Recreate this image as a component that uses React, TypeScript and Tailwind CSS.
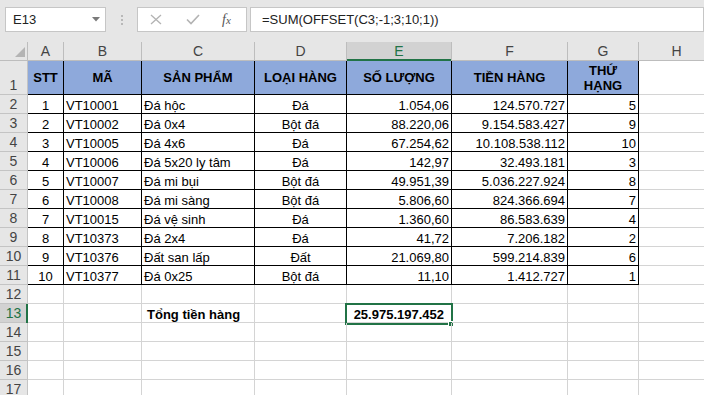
import React from "react";

const COLW = [
  "w-[36px]",
  "w-[78px]",
  "w-[113px]",
  "w-[92px]",
  "w-[105px]",
  "w-[116px]",
  "w-[71px]",
  "w-[76px]",
];
const LETTERS = ["A", "B", "C", "D", "E", "F", "G", "H"];

const DATA: string[][] = [
  ["1", "VT10001", "Đá hộc", "Đá", "1.054,06", "124.570.727", "5"],
  ["2", "VT10002", "Đá 0x4", "Bột đá", "88.220,06", "9.154.583.427", "9"],
  ["3", "VT10005", "Đá 4x6", "Đá", "67.254,62", "10.108.538.112", "10"],
  ["4", "VT10006", "Đá 5x20 ly tâm", "Đá", "142,97", "32.493.181", "3"],
  ["5", "VT10007", "Đá mi bụi", "Bột đá", "49.951,39", "5.036.227.924", "8"],
  ["6", "VT10008", "Đá mi sàng", "Bột đá", "5.806,60", "824.366.694", "7"],
  ["7", "VT10015", "Đá vệ sinh", "Đá", "1.360,60", "86.583.639", "4"],
  ["8", "VT10373", "Đá 2x4", "Đá", "41,72", "7.206.182", "2"],
  ["9", "VT10376", "Đất san lấp", "Đất", "21.069,80", "599.214.839", "6"],
  ["10", "VT10377", "Đá 0x25", "Bột đá", "11,10", "1.412.727", "1"],
];

const ALIGN = [
  "justify-center",
  "justify-start pl-[2px]",
  "justify-start pl-[2px]",
  "justify-center",
  "justify-end pr-[2px]",
  "justify-end pr-[2px]",
  "justify-end pr-[2px]",
];

const HEADERS = ["STT", "MÃ", "SẢN PHẨM", "LOẠI HÀNG", "SỐ LƯỢNG", "TIỀN HÀNG", "THỨ HẠNG"];

function RowHeader({ n, tall, active }: { n: number; tall?: boolean; active?: boolean }) {
  return (
    <div
      className={
        "relative w-[28px] shrink-0 flex items-end justify-center border-r border-b border-[#c4c4c4] text-[14px] leading-[15px] " +
        (active ? "bg-[#d2d2d2] text-[#217346]" : "bg-[#e6e6e6] text-[#444]") +
        (tall ? " h-[34px]" : " h-[19px]")
      }
    >
      <span className="pb-[1px]">{n}</span>
      {active && <div className="absolute right-[-1px] top-0 w-[2px] h-[19px] bg-[#217346]" />}
    </div>
  );
}

export default function App() {
  return (
    <div className="w-[704px] h-[395px] overflow-hidden bg-white font-['Liberation_Sans',Arial,sans-serif] text-black">
      {/* formula bar */}
      <div className="h-[42px] bg-[#e6e6e6] flex items-start pt-[7px]">
        <div className="ml-[5px] w-[101px] h-[25px] shrink-0 bg-white border border-[#c6c6c6] flex items-center">
          <span className="pl-[7px] text-[13px] text-[#222]">E13</span>
          <svg className="ml-auto mr-[5px]" width="8" height="5" viewBox="0 0 8 5">
            <polygon points="0,0 8,0 4,4.5" fill="#7a7a7a" />
          </svg>
        </div>
        <div className="w-[31px] h-[25px] shrink-0 flex flex-col items-center justify-center gap-[2px]">
          <div className="w-[2px] h-[2px] bg-[#b8b8b8]" />
          <div className="w-[2px] h-[2px] bg-[#b8b8b8]" />
          <div className="w-[2px] h-[2px] bg-[#b8b8b8]" />
        </div>
        <div className="w-[110px] h-[25px] shrink-0 bg-white border border-[#c6c6c6] flex items-center">
          <svg className="ml-[12px]" width="12" height="11" viewBox="0 0 12 11">
            <path d="M1 1 L11 10 M11 1 L1 10" stroke="#b3b3b3" strokeWidth="1.3" fill="none" />
          </svg>
          <svg className="ml-[24px]" width="14" height="11" viewBox="0 0 14 11">
            <path d="M1 5.5 L5 9.5 L13 1" stroke="#b3b3b3" strokeWidth="1.6" fill="none" />
          </svg>
          <span className="ml-[22px] font-['Liberation_Serif',serif] italic text-[14px] leading-[14px] text-[#555]">
            f<span className="text-[11px]">x</span>
          </span>
        </div>
        <div className="ml-[3px] flex-1 h-[25px] bg-white border border-[#c6c6c6] flex items-center">
          <span className="pl-[11px] text-[13px] text-[#222]">=SUM(OFFSET(C3;-1;3;10;1))</span>
        </div>
      </div>

      {/* column headers */}
      <div className="flex h-[19px]">
        <div className="relative w-[28px] shrink-0 h-[19px] bg-[#e6e6e6] border-r border-b border-[#bdbdbd]">
          <svg className="absolute left-0 top-0" width="28" height="19" viewBox="0 0 28 19">
            <polygon points="25,5 25,15 15,15" fill="#b4b4b4" />
          </svg>
        </div>
        {LETTERS.map((l, i) => (
          <div
            key={l}
            className={
              COLW[i] +
              " relative shrink-0 h-[19px] flex items-end justify-center border-r border-b text-[14px] leading-[15px] " +
              (i === 4
                ? "bg-[#d2d2d2] text-[#217346] border-[#bdbdbd]"
                : "bg-[#e6e6e6] text-[#444] border-[#bdbdbd]")
            }
          >
            <span className="pb-[1px]">{l}</span>
            {i === 4 && <div className="absolute left-0 right-0 bottom-[-1px] h-[2px] bg-[#217346]" />}
          </div>
        ))}
      </div>

      {/* row 1 header */}
      <div className="flex h-[34px]">
        <RowHeader n={1} tall />
        {HEADERS.map((h, i) => (
          <div
            key={h}
            className={
              COLW[i] +
              " shrink-0 h-[34px] flex items-center justify-center text-center bg-[#8ea9db] border-r border-b border-black font-bold text-[13px] leading-[15px]"
            }
          >
            {i === 6 ? (
              <span>
                THỨ
                <br />
                HẠNG
              </span>
            ) : (
              <span>{h}</span>
            )}
          </div>
        ))}
        <div className={COLW[7] + " shrink-0 h-[34px] border-r border-b border-[#d4d4d4]"} />
      </div>

      {/* data rows */}
      {DATA.map((r, ri) => (
        <div key={ri} className="flex h-[19px]">
          <RowHeader n={ri + 2} />
          {r.map((v, ci) => (
            <div
              key={ci}
              className={
                COLW[ci] +
                " shrink-0 h-[19px] flex items-end border-r border-b border-black text-[13px] leading-[15px] whitespace-nowrap overflow-hidden " +
                ALIGN[ci]
              }
            >
              <span>{v}</span>
            </div>
          ))}
          <div className={COLW[7] + " shrink-0 h-[19px] border-r border-b border-[#d4d4d4]"} />
        </div>
      ))}

      {/* empty rows 12-17 */}
      {[12, 13, 14, 15, 16, 17].map((n) => (
        <div key={n} className="flex h-[19px]">
          <RowHeader n={n} active={n === 13} />
          {COLW.map((w, ci) => (
            <div
              key={ci}
              className={
                w +
                " relative shrink-0 h-[19px] flex items-end border-r border-b border-[#d4d4d4] text-[13px] leading-[15px] whitespace-nowrap " +
                (n === 13 && ci === 4 ? "justify-end pr-[7px]" : "justify-start pl-[5px]")
              }
            >
              {n === 13 && ci === 2 && <span className="font-bold">Tổng tiền hàng</span>}
              {n === 13 && ci === 4 && (
                <>
                  <span className="font-bold">25.975.197.452</span>
                  <div className="absolute left-[-2px] top-[-1px] w-[108px] h-[22px] border-2 border-[#217346]" />
                  <div className="absolute left-[101px] top-[17px] w-[6px] h-[6px] bg-[#217346] border border-white" />
                </>
              )}
            </div>
          ))}
        </div>
      ))}
    </div>
  );
}
